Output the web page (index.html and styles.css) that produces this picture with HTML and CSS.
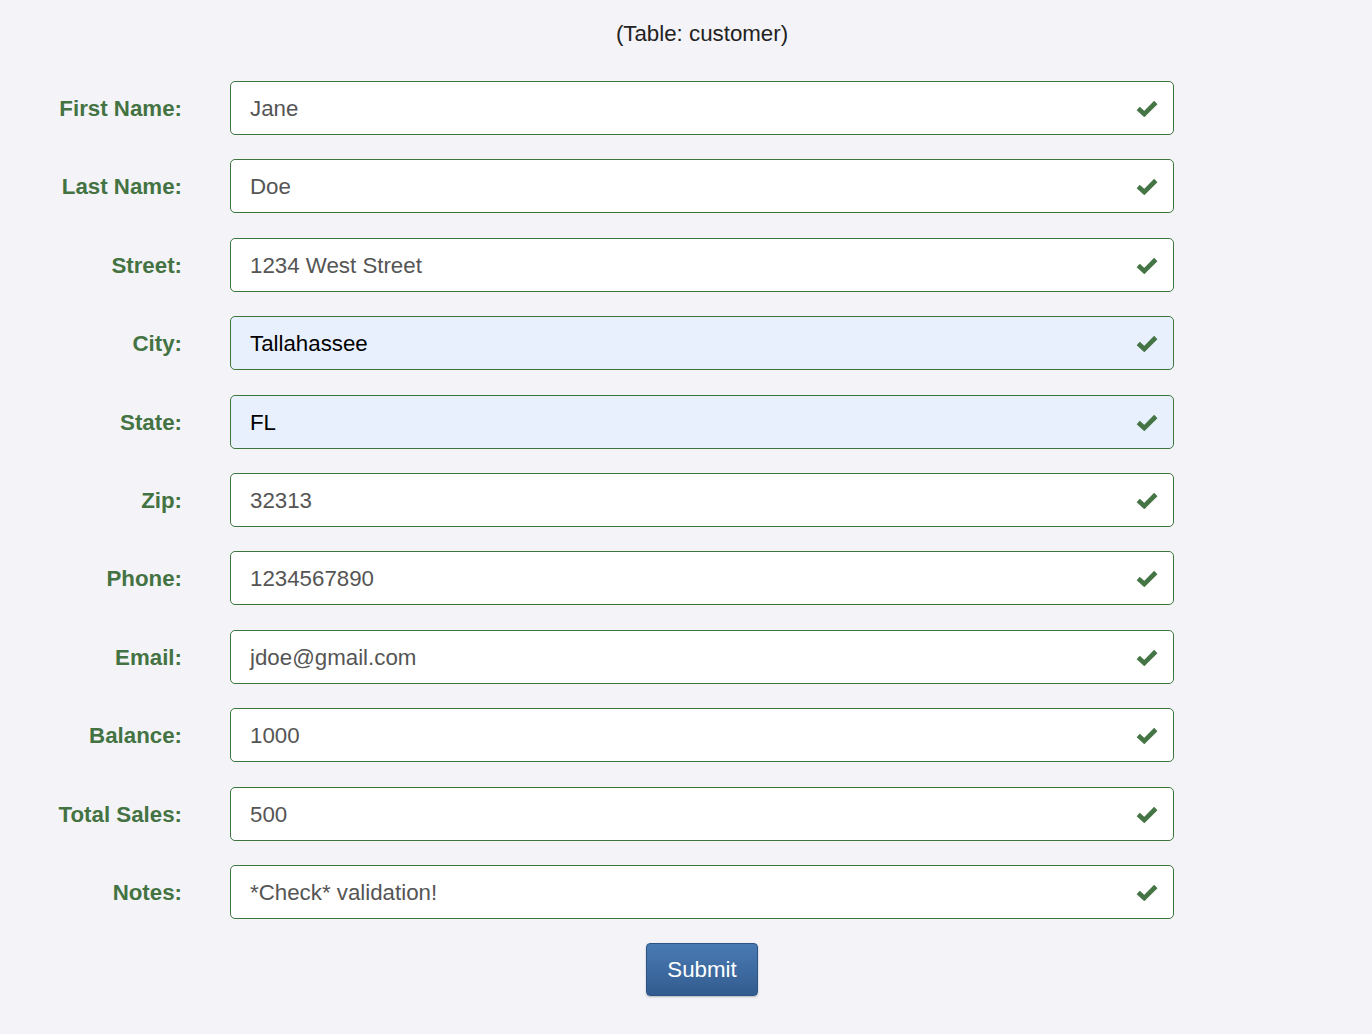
FILE: index.html
```html
<!DOCTYPE html>
<html>
<head>
<meta charset="utf-8">
<link rel="stylesheet" href="styles.css">
</head>
<body>
<div class="page">
  <div class="title">(Table: customer)</div>
  <form class="form">
    <label class="lbl">First Name:</label>
    <div class="field"><span class="val">Jane</span><svg class="ok" viewBox="0 0 20 16"><path d="M2 8.5 L7.5 13.5 L18 3"/></svg></div>
    <label class="lbl">Last Name:</label>
    <div class="field"><span class="val">Doe</span><svg class="ok" viewBox="0 0 20 16"><path d="M2 8.5 L7.5 13.5 L18 3"/></svg></div>
    <label class="lbl">Street:</label>
    <div class="field"><span class="val">1234 West Street</span><svg class="ok" viewBox="0 0 20 16"><path d="M2 8.5 L7.5 13.5 L18 3"/></svg></div>
    <label class="lbl">City:</label>
    <div class="field auto"><span class="val">Tallahassee</span><svg class="ok" viewBox="0 0 20 16"><path d="M2 8.5 L7.5 13.5 L18 3"/></svg></div>
    <label class="lbl">State:</label>
    <div class="field auto"><span class="val">FL</span><svg class="ok" viewBox="0 0 20 16"><path d="M2 8.5 L7.5 13.5 L18 3"/></svg></div>
    <label class="lbl">Zip:</label>
    <div class="field"><span class="val">32313</span><svg class="ok" viewBox="0 0 20 16"><path d="M2 8.5 L7.5 13.5 L18 3"/></svg></div>
    <label class="lbl">Phone:</label>
    <div class="field"><span class="val">1234567890</span><svg class="ok" viewBox="0 0 20 16"><path d="M2 8.5 L7.5 13.5 L18 3"/></svg></div>
    <label class="lbl">Email:</label>
    <div class="field"><span class="val">jdoe@gmail.com</span><svg class="ok" viewBox="0 0 20 16"><path d="M2 8.5 L7.5 13.5 L18 3"/></svg></div>
    <label class="lbl">Balance:</label>
    <div class="field"><span class="val">1000</span><svg class="ok" viewBox="0 0 20 16"><path d="M2 8.5 L7.5 13.5 L18 3"/></svg></div>
    <label class="lbl">Total Sales:</label>
    <div class="field"><span class="val">500</span><svg class="ok" viewBox="0 0 20 16"><path d="M2 8.5 L7.5 13.5 L18 3"/></svg></div>
    <label class="lbl">Notes:</label>
    <div class="field"><span class="val">*Check* validation!</span><svg class="ok" viewBox="0 0 20 16"><path d="M2 8.5 L7.5 13.5 L18 3"/></svg></div>
  </form>
  <div class="actions"><button class="submit" type="button">Submit</button></div>
</div>
</body>
</html>
```
FILE: styles.css
```css
html, body {
  margin: 0;
  padding: 0;
  background: #f4f4f8;
  font-family: "Liberation Sans", Arial, Helvetica, sans-serif;
}
.page {
  width: 1372px;
  height: 1034px;
  box-sizing: border-box;
  padding-top: 21px;
}
.title {
  text-align: center;
  font-size: 22.3px;
  line-height: 26px;
  color: #222;
  margin-left: 32px;
}
.form {
  display: grid;
  grid-template-columns: 182px 944px;
  column-gap: 48px;
  row-gap: 24.4px;
  margin-top: 34px;
}
.lbl {
  text-align: right;
  font-weight: bold;
  font-size: 22.3px;
  color: #447343;
  align-self: center;
  padding-top: 2px;
}
.field {
  height: 54px;
  box-sizing: border-box;
  border: 1px solid #3c763d;
  border-radius: 5px;
  background: #fff;
  display: flex;
  align-items: center;
  padding: 0 15px 0 19px;
}
.field.auto {
  background: #e8f0fe;
}
.val {
  flex: 1;
  font-size: 22.3px;
  color: #555;
  padding-top: 2px;
}
.field.auto .val {
  color: #000;
}
.ok {
  width: 22px;
  height: 18px;
  fill: none;
  stroke: #457445;
  stroke-width: 4.2;
  stroke-linecap: butt;
  stroke-linejoin: miter;
}
.actions {
  display: flex;
  justify-content: center;
  margin-top: 24px;
  padding-left: 32px;
}
.submit {
  width: 112px;
  height: 53px;
  border: 1px solid #2b5584;
  border-radius: 4px;
  background: linear-gradient(#4a7ab3, #325c8f);
  color: #fff;
  font-family: "Liberation Sans", Arial, sans-serif;
  font-size: 22.3px;
  box-shadow: 0 1px 2px rgba(0,0,0,0.25);
  padding: 2px 0 0 0;
}
```
